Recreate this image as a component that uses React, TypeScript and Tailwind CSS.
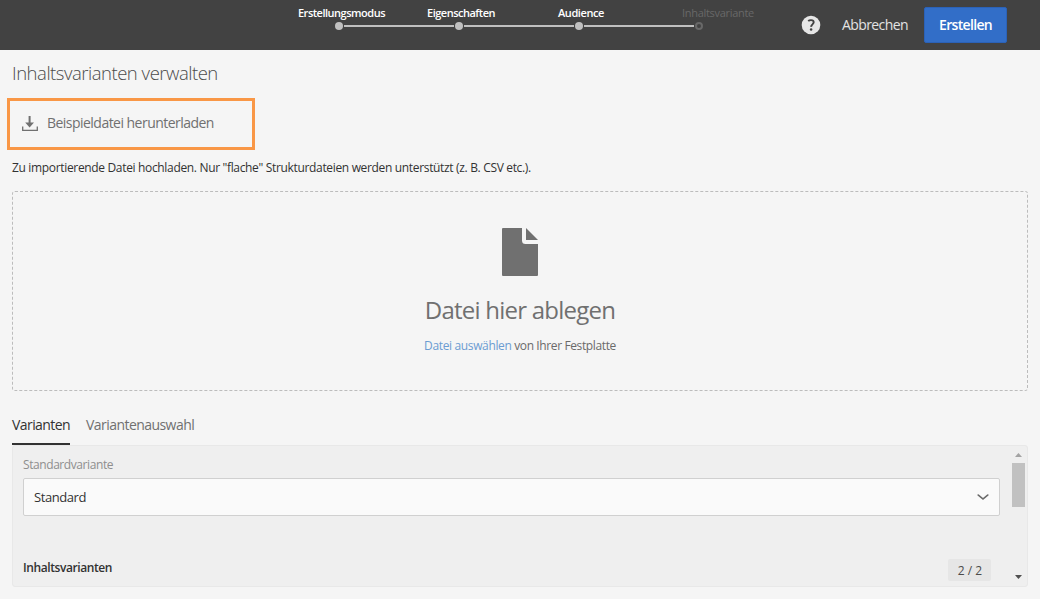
import { ChevronDown } from 'lucide-react';

const steps = [
  { label: 'Erstellungsmodus', style: 'pl-[5px] tracking-[-0.49px] font-semibold text-white', done: true },
  { label: 'Eigenschaften', style: 'pl-[4px] tracking-[-0.5px] font-semibold text-white', done: true },
  { label: 'Audience', style: 'pl-[4px] tracking-[-0.41px] font-semibold text-white', done: true },
  { label: 'Inhaltsvariante', style: 'pl-[38px] tracking-[-0.3px] text-[#686868]', done: false },
];

function Wizard() {
  return (
    <ol className="flex pt-1">
      {steps.map((s, i) => (
        <li key={s.label} className="flex w-[120px] flex-col">
          <span className={`h-[18px] text-center text-[11px] leading-[18px] whitespace-nowrap ${s.style}`}>{s.label}</span>
          <span className="flex h-2 items-center">
            <span className={i > 0 ? 'h-[2px] w-[55px] bg-[#c0c0c0]' : 'w-[55px]'} />
            <span
              className={
                s.done
                  ? 'mx-px size-2 rounded-full bg-[#c0c0c0]'
                  : 'mx-px size-2 rounded-full border-2 border-[#686868]'
              }
            />
            <span className={i < steps.length - 1 ? 'h-[2px] w-[55px] bg-[#c0c0c0]' : 'w-[55px]'} />
          </span>
        </li>
      ))}
    </ol>
  );
}

function Header() {
  return (
    <header className="flex h-[50px] bg-[#424242] pl-[279px]">
      <Wizard />
      <div className="flex h-full items-center pl-[42px]">
        <svg className="size-5" viewBox="0 0 20 20">
          <circle cx="10" cy="10" r="9.3" fill="#e6e6e6" />
          <path d="M7.2 6C8 5.300 9 5.100 10 5.100c1.700 0 2.700.9 2.700 2.200 0 2-2.700 2.200-2.500 4.500" fill="none" stroke="#424242" strokeWidth="1.9" />
          <circle cx="10.100" cy="14.400" r="1.250" fill="#424242" />
        </svg>
        <button className="ml-5 w-[68px] pb-[2px] text-[14px] font-medium tracking-[-0.59px] whitespace-nowrap text-[#e3e3e3]">Abbrechen</button>
        <button className="ml-[15px] h-9 w-[83px] rounded-[2px] border border-[#2b62b8] bg-[#326ec8] pb-px text-[14px] font-semibold tracking-[-0.67px] text-white">
          Erstellen
        </button>
      </div>
    </header>
  );
}

function DropZone() {
  return (
    <section className="mx-3 mt-[7px] h-[200px]">
      <div className="flex h-full flex-col items-center rounded-[3px] border border-dashed border-[#bcbcbc] pt-9">
        <svg className="h-12 w-9 shrink-0" viewBox="0 0 36 48" fill="#707070">
          <path d="M1 0h19v12.500a3.500 3.500 0 0 0 3.500 3.500H36v31a1 1 0 0 1-1 1H1a1 1 0 0 1-1-1V1a1 1 0 0 1 1-1z" />
          <path d="M24 0l12 12H24z" />
        </svg>
        <h2 className="mt-[14px] text-[24px] leading-10 tracking-[-0.76px] text-[#707070]">Datei hier ablegen</h2>
        <p className="mt-[6px] text-[12px] leading-5 tracking-[-0.38px] text-[#6a6a6a]">
          <a className="tracking-[-0.36px] text-[#6b9cd2]">Datei auswählen</a> von Ihrer Festplatte
        </p>
      </div>
    </section>
  );
}

function VariantPanel() {
  return (
    <section className="mx-3 flex h-[142px] justify-between rounded-[3px] border border-[#e8e8e8] bg-[#efefef]">
      <div className="w-[987px] pl-[10px]">
        <div className="pt-[9px] text-[12px] leading-5 tracking-[-0.42px] text-[#8e8e8e]">Standardvariante</div>
        <div className="mt-[3px] flex h-[38px] w-[977px] items-center justify-between rounded-[2px] border border-[#d0d0d0] bg-[#fafafa] pr-2 pl-[10px]">
          <span className="pt-px text-[13px] tracking-[-0.43px] text-[#323232]">Standard</span>
          <ChevronDown className="size-4 scale-x-120 text-[#6a6a6a]" strokeWidth={2.2} />
        </div>
        <div className="mt-[42px] flex h-[24px] items-center justify-between pr-[9px]">
          <span className="-mt-[5px] text-[12px] font-semibold tracking-[-0.41px] text-[#323232]">Inhaltsvarianten</span>
          <span className="flex h-[22px] w-[43px] items-center justify-center rounded-[2px] bg-[#e6e6e6] pt-px pl-px text-[12px] text-[#4b4b4b]">2 / 2</span>
        </div>
      </div>
      <div className="flex w-[17px] flex-col items-center">
        <svg className="mt-[7px] mb-[6px] h-1 w-[7px] shrink-0" viewBox="0 0 7 4"><path d="M0 4L3.500 0 7 4z" fill="#a3a3a3" /></svg>
        <div className="h-[44px] w-[13px] bg-[#c1c1c1]" />
        <svg className="mt-auto mb-[7px] h-1 w-[7px] shrink-0" viewBox="0 0 7 4"><path d="M0 0h7L3.500 4z" fill="#505050" /></svg>
      </div>
    </section>
  );
}

export default function App() {
  return (
    <div className="h-[599px] w-[1040px] overflow-hidden bg-[#f5f5f5] font-['Open_Sans','Noto_Sans',sans-serif]">
      <Header />
      <h1 className="h-12 pl-3 text-[18.5px] leading-[45px] font-light tracking-[-0.48px] text-[#4b4b4b]">Inhaltsvarianten verwalten</h1>
      <button className="ml-[7px] flex h-[52px] w-[248px] items-center border-[3px] border-[#f99746] pl-3 text-[#707070]">
        <svg className="-mt-px size-4" viewBox="0 0 16 16">
          <path d="M.7 10.500v3.800h14.600v-3.800" fill="none" stroke="#707070" strokeWidth="1.300" />
          <path d="M6.600 0h2v6.500h3.400L7.600 11.500 3.200 6.500h3.400z" fill="#707070" />
        </svg>
        <span className="-mt-1 ml-[9px] text-[14px] tracking-[-0.53px] whitespace-nowrap">Beispieldatei herunterladen</span>
      </button>
      <p className="h-[34px] pl-3 text-[12px] leading-[36px] tracking-[-0.335px] text-[#323232]">
        Zu importierende Datei hochladen. Nur "flache" Strukturdateien werden unterstützt (z. B. CSV etc.).
      </p>
      <DropZone />
      <nav className="mt-[16px] flex gap-4 pl-3 text-[14px] leading-9">
        <a className="h-[38px] w-[58px] border-b-2 border-[#323232] tracking-[-0.57px] whitespace-nowrap text-[#323232]">Varianten</a>
        <a className="tracking-[-0.55px] whitespace-nowrap text-[#707070]">Variantenauswahl</a>
      </nav>
      <VariantPanel />
    </div>
  );
}
